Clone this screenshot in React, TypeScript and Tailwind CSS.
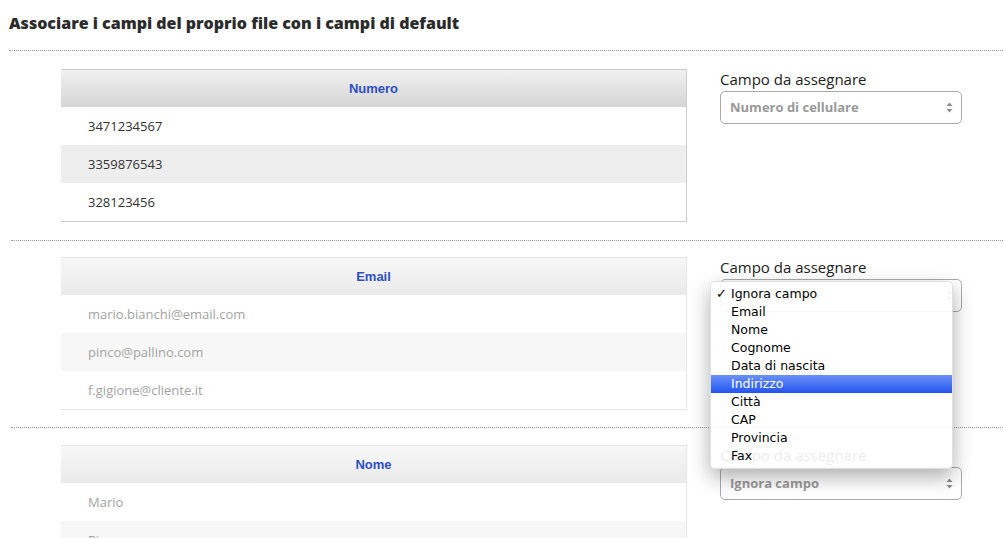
import React from "react";

type Props = { header: string; rows: string[]; faded?: boolean };

function DataTable({ header, rows, faded }: Props) {
  return (
    <div
      className={
        "w-[626px] shrink-0 border-t border-r border-b " +
        (faded ? "border-[#e6e6e6]" : "border-[#cccccc]")
      }
    >
      <div
        className={
          "h-[37px] flex items-center justify-center bg-gradient-to-b " +
          (faded ? "from-[#f7f7f7] to-[#eaeaea]" : "from-[#f1f1f1] to-[#d5d5d5]")
        }
      >
        <span
          className="text-[13px] font-bold text-[#2d4fc4]"
          style={{ fontFamily: '"Liberation Sans", Arial, sans-serif' }}
        >
          {header}
        </span>
      </div>
      {rows.map((r, i) => (
        <div
          key={i}
          className={
            "h-[38px] flex items-center pl-[27px] pt-[1px] text-[13px] " +
            (i % 2 === 1 ? (faded ? "bg-[#f7f7f7]" : "bg-[#eeeeee]") : "bg-white") +
            " " +
            (faded ? "text-[#a3a3a3]" : "text-[#333333]")
          }
        >
          {r}
        </div>
      ))}
    </div>
  );
}

function Arrows() {
  return (
    <svg width="7" height="11" viewBox="0 0 7 11" className="shrink-0">
      <path d="M3.5 0.5 L6.5 4 L0.5 4 Z" fill="#8c8c8c" />
      <path d="M3.5 10.5 L6.5 7 L0.5 7 Z" fill="#8c8c8c" />
    </svg>
  );
}

function SelectBox({ value }: { value: string }) {
  return (
    <div className="mt-[2px] w-[242px] h-[33px] rounded-[5px] border border-[#aaaaaa] bg-white flex items-center justify-between pl-[9px] pr-[8px]">
      <span className="text-[13px] font-bold text-[#999999]">{value}</span>
      <Arrows />
    </div>
  );
}

const menuItems = [
  "Ignora campo",
  "Email",
  "Nome",
  "Cognome",
  "Data di nascita",
  "Indirizzo",
  "Città",
  "CAP",
  "Provincia",
  "Fax",
];

function Menu() {
  return (
    <div
      className="absolute left-[-10px] top-[24px] w-[243px] rounded-[5px] border border-[rgba(0,0,0,0.12)] bg-[rgba(255,255,255,0.91)] py-[3px] shadow-[0_8px_20px_rgba(0,0,0,0.32)] z-10"
      style={{ fontFamily: '"DejaVu Sans", "Liberation Sans", sans-serif' }}
    >
      {menuItems.map((m, i) => (
        <div
          key={m}
          className={
            "relative h-[18px] flex items-center pl-[20px] text-[12.5px] " +
            (i === 5
              ? "bg-gradient-to-b from-[#6b90f9] to-[#2353ef] text-white"
              : "text-black")
          }
        >
          {i === 0 && <span className="absolute left-[5px] text-[13px]">✓</span>}
          {m}
        </div>
      ))}
    </div>
  );
}

function Divider({ left }: { left: string }) {
  return <div className={"h-0 border-t border-dotted border-[#9a9a9a] " + left} />;
}

export default function App() {
  return (
    <div
      className="w-[1003px] h-[538px] overflow-hidden bg-white"
      style={{ fontFamily: '"Open Sans", "Liberation Sans", sans-serif' }}
    >
      <div className="pt-[12px] pl-[9px] leading-[22px] text-[16px] font-extrabold text-[#2b2b2b]">
        Associare i campi del proprio file con i campi di default
      </div>
      <div className="mt-[16px]">
        <Divider left="ml-[9px]" />
      </div>

      <div className="flex pl-[61px] pt-[18px] pb-[18px]">
        <DataTable header="Numero" rows={["3471234567", "3359876543", "328123456"]} />
        <div className="ml-[33px]">
          <div className="text-[15px] leading-[20px] text-[#222222]">Campo da assegnare</div>
          <SelectBox value="Numero di cellulare" />
        </div>
      </div>

      <Divider left="ml-[11px]" />

      <div className="flex pl-[61px] pt-[16px] pb-[17px]">
        <DataTable
          header="Email"
          rows={["mario.bianchi@email.com", "pinco@pallino.com", "f.gigione@cliente.it"]}
          faded
        />
        <div className="ml-[33px] relative">
          <div className="text-[15px] leading-[20px] text-[#222222]">Campo da assegnare</div>
          <SelectBox value="Ignora campo" />
          <Menu />
        </div>
      </div>

      <Divider left="ml-[11px]" />

      <div className="flex pl-[61px] pt-[17px] pb-[17px]">
        <DataTable header="Nome" rows={["Mario", "Pinco", "Franco"]} faded />
        <div className="ml-[33px]">
          <div className="text-[15px] leading-[20px] text-[#222222]">Campo da assegnare</div>
          <SelectBox value="Ignora campo" />
        </div>
      </div>
    </div>
  );
}
